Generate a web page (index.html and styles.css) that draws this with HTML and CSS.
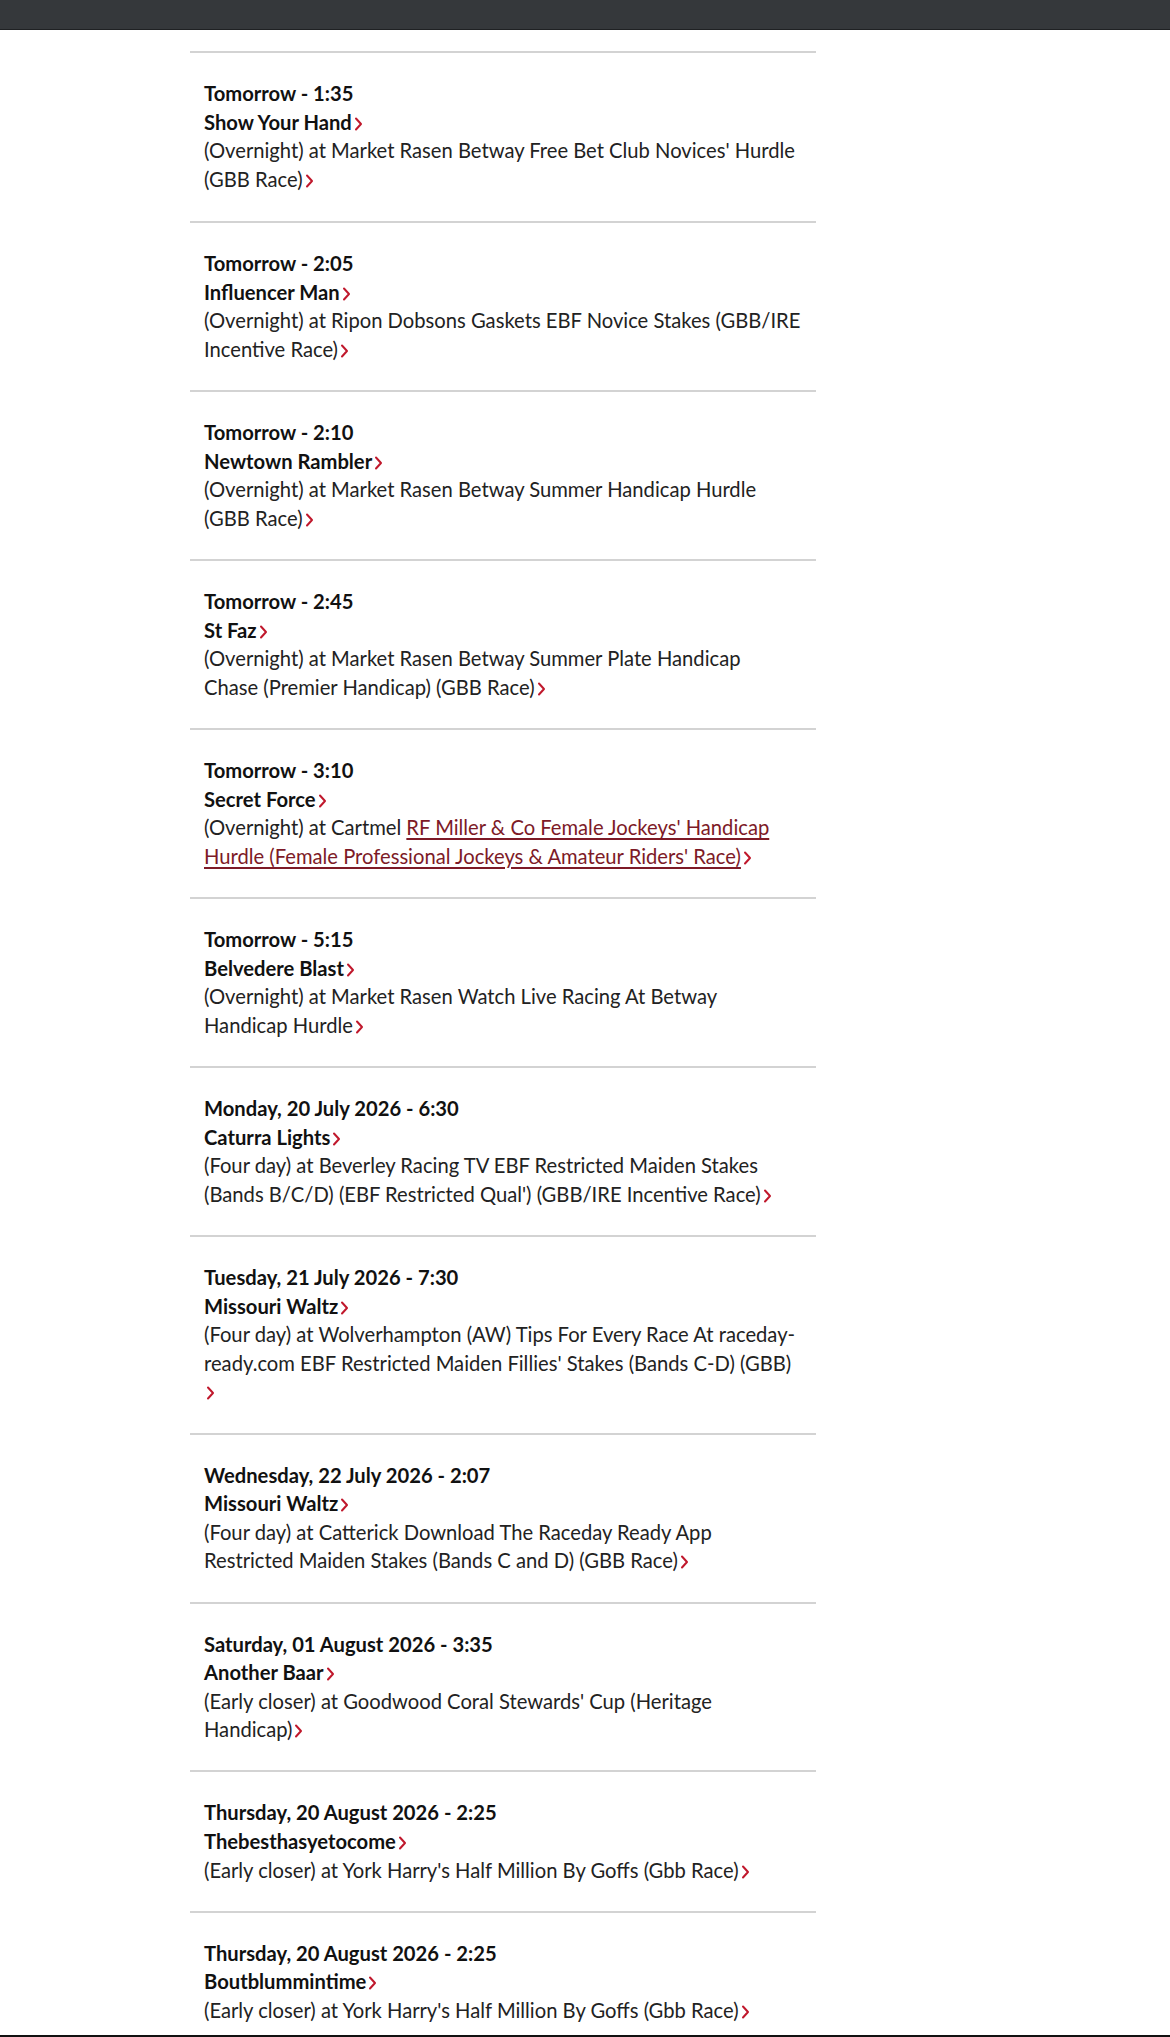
FILE: index.html
```html
<!DOCTYPE html>
<html lang="en">
<head>
<meta charset="utf-8">
<title>Entries</title>
<link rel="stylesheet" href="styles.css">
</head>
<body>
<header class="topbar"></header>
<main class="entries">
  <ul class="entry-list">
    <li class="entry">
      <div class="entry-when">Tomorrow - 1:35</div>
      <div class="entry-horse">Show Your Hand<svg class="chev" viewBox="0 0 8 14"><path d="M1.5 1.5 L6.5 7 L1.5 12.5"/></svg></div>
      <div class="entry-race">(Overnight) at Market Rasen Betway Free Bet Club Novices' Hurdle (GBB Race)<svg class="chev" viewBox="0 0 8 14"><path d="M1.5 1.5 L6.5 7 L1.5 12.5"/></svg></div>
    </li>
    <li class="entry">
      <div class="entry-when">Tomorrow - 2:05</div>
      <div class="entry-horse">Influencer Man<svg class="chev" viewBox="0 0 8 14"><path d="M1.5 1.5 L6.5 7 L1.5 12.5"/></svg></div>
      <div class="entry-race">(Overnight) at Ripon Dobsons Gaskets EBF Novice Stakes (GBB/IRE Incentive Race)<svg class="chev" viewBox="0 0 8 14"><path d="M1.5 1.5 L6.5 7 L1.5 12.5"/></svg></div>
    </li>
    <li class="entry">
      <div class="entry-when">Tomorrow - 2:10</div>
      <div class="entry-horse">Newtown Rambler<svg class="chev" viewBox="0 0 8 14"><path d="M1.5 1.5 L6.5 7 L1.5 12.5"/></svg></div>
      <div class="entry-race">(Overnight) at Market Rasen Betway Summer Handicap Hurdle (GBB Race)<svg class="chev" viewBox="0 0 8 14"><path d="M1.5 1.5 L6.5 7 L1.5 12.5"/></svg></div>
    </li>
    <li class="entry">
      <div class="entry-when">Tomorrow - 2:45</div>
      <div class="entry-horse">St Faz<svg class="chev" viewBox="0 0 8 14"><path d="M1.5 1.5 L6.5 7 L1.5 12.5"/></svg></div>
      <div class="entry-race">(Overnight) at Market Rasen Betway Summer Plate Handicap<br>Chase (Premier Handicap) (GBB Race)<svg class="chev" viewBox="0 0 8 14"><path d="M1.5 1.5 L6.5 7 L1.5 12.5"/></svg></div>
    </li>
    <li class="entry">
      <div class="entry-when">Tomorrow - 3:10</div>
      <div class="entry-horse">Secret Force<svg class="chev" viewBox="0 0 8 14"><path d="M1.5 1.5 L6.5 7 L1.5 12.5"/></svg></div>
      <div class="entry-race">(Overnight) at Cartmel <a class="race-link" href="#">RF Miller &amp; Co Female Jockeys' Handicap Hurdle (Female Professional Jockeys &amp; Amateur Riders' Race)</a><svg class="chev" viewBox="0 0 8 14"><path d="M1.5 1.5 L6.5 7 L1.5 12.5"/></svg></div>
    </li>
    <li class="entry">
      <div class="entry-when">Tomorrow - 5:15</div>
      <div class="entry-horse">Belvedere Blast<svg class="chev" viewBox="0 0 8 14"><path d="M1.5 1.5 L6.5 7 L1.5 12.5"/></svg></div>
      <div class="entry-race">(Overnight) at Market Rasen Watch Live Racing At Betway Handicap Hurdle<svg class="chev" viewBox="0 0 8 14"><path d="M1.5 1.5 L6.5 7 L1.5 12.5"/></svg></div>
    </li>
    <li class="entry">
      <div class="entry-when">Monday, 20 July 2026 - 6:30</div>
      <div class="entry-horse">Caturra Lights<svg class="chev" viewBox="0 0 8 14"><path d="M1.5 1.5 L6.5 7 L1.5 12.5"/></svg></div>
      <div class="entry-race">(Four day) at Beverley Racing TV EBF Restricted Maiden Stakes (Bands B/C/D) (EBF Restricted Qual') (GBB/IRE Incentive Race)<svg class="chev" viewBox="0 0 8 14"><path d="M1.5 1.5 L6.5 7 L1.5 12.5"/></svg></div>
    </li>
    <li class="entry">
      <div class="entry-when">Tuesday, 21 July 2026 - 7:30</div>
      <div class="entry-horse">Missouri Waltz<svg class="chev" viewBox="0 0 8 14"><path d="M1.5 1.5 L6.5 7 L1.5 12.5"/></svg></div>
      <div class="entry-race">(Four day) at Wolverhampton (AW) Tips For Every Race At raceday-ready.com EBF Restricted Maiden Fillies' Stakes (Bands C-D) (GBB)<br><svg class="chev" viewBox="0 0 8 14"><path d="M1.5 1.5 L6.5 7 L1.5 12.5"/></svg></div>
    </li>
    <li class="entry">
      <div class="entry-when">Wednesday, 22 July 2026 - 2:07</div>
      <div class="entry-horse">Missouri Waltz<svg class="chev" viewBox="0 0 8 14"><path d="M1.5 1.5 L6.5 7 L1.5 12.5"/></svg></div>
      <div class="entry-race">(Four day) at Catterick Download The Raceday Ready App Restricted Maiden Stakes (Bands C and D) (GBB Race)<svg class="chev" viewBox="0 0 8 14"><path d="M1.5 1.5 L6.5 7 L1.5 12.5"/></svg></div>
    </li>
    <li class="entry">
      <div class="entry-when">Saturday, 01 August 2026 - 3:35</div>
      <div class="entry-horse">Another Baar<svg class="chev" viewBox="0 0 8 14"><path d="M1.5 1.5 L6.5 7 L1.5 12.5"/></svg></div>
      <div class="entry-race">(Early closer) at Goodwood Coral Stewards' Cup (Heritage Handicap)<svg class="chev" viewBox="0 0 8 14"><path d="M1.5 1.5 L6.5 7 L1.5 12.5"/></svg></div>
    </li>
    <li class="entry">
      <div class="entry-when">Thursday, 20 August 2026 - 2:25</div>
      <div class="entry-horse">Thebesthasyetocome<svg class="chev" viewBox="0 0 8 14"><path d="M1.5 1.5 L6.5 7 L1.5 12.5"/></svg></div>
      <div class="entry-race">(Early closer) at York Harry's Half Million By Goffs (Gbb Race)<svg class="chev" viewBox="0 0 8 14"><path d="M1.5 1.5 L6.5 7 L1.5 12.5"/></svg></div>
    </li>
    <li class="entry">
      <div class="entry-when">Thursday, 20 August 2026 - 2:25</div>
      <div class="entry-horse">Boutblummintime<svg class="chev" viewBox="0 0 8 14"><path d="M1.5 1.5 L6.5 7 L1.5 12.5"/></svg></div>
      <div class="entry-race">(Early closer) at York Harry's Half Million By Goffs (Gbb Race)<svg class="chev" viewBox="0 0 8 14"><path d="M1.5 1.5 L6.5 7 L1.5 12.5"/></svg></div>
    </li>
  </ul>
</main>
<footer class="bottombar"></footer>
</body>
</html>
```

FILE: styles.css
```css
* {
  box-sizing: border-box;
}

html, body {
  margin: 0;
  padding: 0;
  background: #ffffff;
}

body {
  font-family: "Lato", "Noto Sans", sans-serif;
  font-size: 20.2px;
  line-height: 28.6px;
  color: #1c1c1c;
}

.topbar {
  height: 30px;
  background: #35383b;
  border-bottom: 1px solid #1f2123;
}

.entries {
  padding: 21px 0 0 190px;
}

.entry-list {
  list-style: none;
  margin: 0;
  padding: 0;
  width: 626px;
  border-top: 2px solid #d3d3d3;
}

.entry {
  padding: 26px 12px 26.6px 14px;
  border-bottom: 2px solid #d3d3d3;
}

.entry:first-child {
  padding-bottom: 27.8px;
}

.entry-when,
.entry-horse {
  font-weight: 700;
  color: #111111;
}

.entry-race {
  color: #222222;
}

.race-link {
  color: #7d1a27;
  text-decoration: underline;
  text-underline-offset: 3px;
}

.chev {
  width: 9px;
  height: 14px;
  margin-left: 2px;
  vertical-align: -1px;
  fill: none;
  stroke: #c0182c;
  stroke-width: 2;
  stroke-linecap: round;
  stroke-linejoin: round;
}

.bottombar {
  position: fixed;
  left: 0;
  right: 0;
  bottom: 0;
  height: 2px;
  background: #111111;
}
```
